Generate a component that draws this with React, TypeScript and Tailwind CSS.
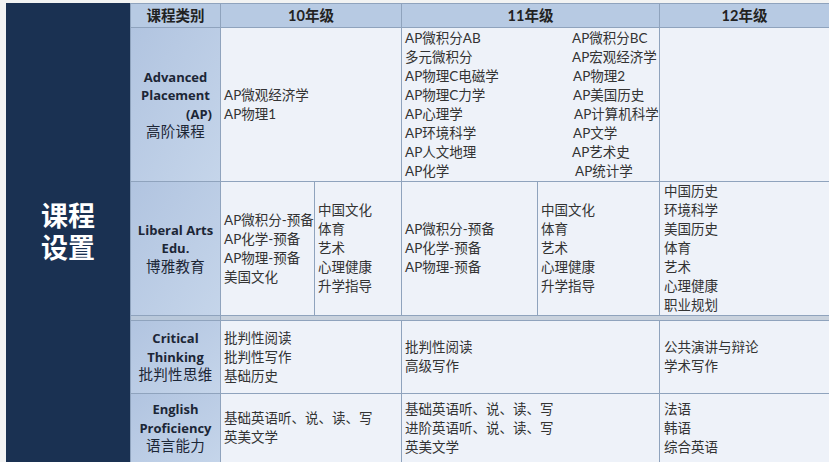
import React from "react";

const cellFont = { fontFamily: '"Lato", "Noto Sans CJK SC", sans-serif' };

function Lines({ items }: { items: string[] }) {
  return (
    <div className="flex flex-col">
      {items.map((t, i) => (
        <div key={i} className="whitespace-nowrap">{t}</div>
      ))}
    </div>
  );
}

function Cell({ children, className = "" }: { children?: React.ReactNode; className?: string }) {
  return (
    <div
      className={
        "flex items-center border-r border-b border-[#8fa3bd] bg-[#eef2f9] pl-[3px] text-[13.5px] leading-[19px] text-[#333] " +
        className
      }
    >
      {children}
    </div>
  );
}

function Cat({ children }: { children: React.ReactNode }) {
  return (
    <div className="flex flex-col items-center justify-center border-r border-b border-[#8fa3bd] bg-linear-to-br from-[#b1c4e0] to-[#c5d5ea] text-center leading-[18.5px] text-[#1c2636]">
      {children}
    </div>
  );
}

function En({ children, className = "" }: { children: React.ReactNode; className?: string }) {
  return (
    <div
      className={"font-bold text-[13px] whitespace-nowrap " + className}
      style={{ fontFamily: '"Open Sans", sans-serif' }}
    >
      {children}
    </div>
  );
}

function Zh({ children }: { children: React.ReactNode }) {
  return <div className="text-[14.5px] whitespace-nowrap tracking-[0.3px]">{children}</div>;
}

const ap11Left = ["AP微积分AB", "多元微积分", "AP物理C电磁学", "AP物理C力学", "AP心理学", "AP环境科学", "AP人文地理", "AP化学"];
const ap11Right: [string, string][] = [
  ["AP微积分BC", "pl-0"],
  ["AP宏观经济学", "pl-0"],
  ["AP物理2", "pl-[1px]"],
  ["AP美国历史", "pl-[1px]"],
  ["AP计算机科学", "pl-[2px]"],
  ["AP文学", "pl-[1px]"],
  ["AP艺术史", "pl-0"],
  ["AP统计学", "pl-[3px]"],
];

export default function App() {
  return (
    <div className="flex h-[462px] w-[829px] overflow-hidden bg-[#f2f3f3] pl-[6px] pt-[3px]" style={cellFont}>
      <div className="flex w-[124px] shrink-0 items-center justify-center bg-[#1a3152] pb-[4px]">
        <div
          className="text-center text-[27px] font-bold leading-[32px] text-white"
          style={{ fontFamily: '"Noto Sans CJK SC", sans-serif' }}
        >
          课程
          <br />
          设置
        </div>
      </div>
      <div className="grid w-[699px] grid-cols-[90px_94px_87px_136px_122px_170px] grid-rows-[24px_154px_134px_5px_73px_69px] border-t border-l border-[#8fa3bd]">
        {/* header */}
        <div className="flex items-center justify-center border-r border-b border-[#8fa3bd] bg-[#b7cae3] text-[14.5px] font-bold text-[#222]">
          课程类别
        </div>
        <div className="col-span-2 flex items-center justify-center border-r border-b border-[#8fa3bd] bg-[#b7cae3] text-[14.5px] font-bold text-[#222]">
          10年级
        </div>
        <div className="col-span-2 flex items-center justify-center border-r border-b border-[#8fa3bd] bg-[#b7cae3] text-[14.5px] font-bold text-[#222]">
          11年级
        </div>
        <div className="flex items-center justify-center border-r border-b border-[#8fa3bd] bg-[#b7cae3] text-[14.5px] font-bold text-[#222]">
          12年级
        </div>

        {/* AP row */}
        <Cat>
          <En>Advanced</En>
          <En>Placement</En>
          <En className="self-end pr-[8px]">(AP)</En>
          <Zh>高阶课程</Zh>
        </Cat>
        <Cell className="col-span-2">
          <Lines items={["AP微观经济学", "AP物理1"]} />
        </Cell>
        <Cell className="col-span-2">
          <div className="grid grid-cols-[167px_auto]">
            <div className="flex flex-col">
              {ap11Left.map((t) => (
                <div key={t} className="whitespace-nowrap">{t}</div>
              ))}
            </div>
            <div className="flex flex-col">
              {ap11Right.map(([t, c]) => (
                <div key={t} className={"whitespace-nowrap " + c}>{t}</div>
              ))}
            </div>
          </div>
        </Cell>
        <Cell />

        {/* Liberal Arts row */}
        <Cat>
          <En>Liberal Arts</En>
          <En>Edu.</En>
          <Zh>博雅教育</Zh>
        </Cat>
        <Cell>
          <Lines items={["AP微积分-预备", "AP化学-预备", "AP物理-预备", "美国文化"]} />
        </Cell>
        <Cell>
          <Lines items={["中国文化", "体育", "艺术", "心理健康", "升学指导"]} />
        </Cell>
        <Cell>
          <Lines items={["AP微积分-预备", "AP化学-预备", "AP物理-预备"]} />
        </Cell>
        <Cell>
          <Lines items={["中国文化", "体育", "艺术", "心理健康", "升学指导"]} />
        </Cell>
        <Cell className="pl-[4px]">
          <Lines items={["中国历史", "环境科学", "美国历史", "体育", "艺术", "心理健康", "职业规划"]} />
        </Cell>

        {/* separator */}
        <div className="border-r border-b border-[#8fa3bd] bg-[#b9c8da]" />
        <div className="col-span-5 border-r border-b border-[#8fa3bd] bg-[#c9d2dd]" />

        {/* Critical Thinking row */}
        <Cat>
          <En>Critical</En>
          <En>Thinking</En>
          <Zh>批判性思维</Zh>
        </Cat>
        <Cell className="col-span-2">
          <Lines items={["批判性阅读", "批判性写作", "基础历史"]} />
        </Cell>
        <Cell className="col-span-2">
          <Lines items={["批判性阅读", "高级写作"]} />
        </Cell>
        <Cell className="pl-[4px]">
          <Lines items={["公共演讲与辩论", "学术写作"]} />
        </Cell>

        {/* English row */}
        <Cat>
          <En>English</En>
          <En>Proficiency</En>
          <Zh>语言能力</Zh>
        </Cat>
        <Cell className="col-span-2">
          <Lines items={["基础英语听、说、读、写", "英美文学"]} />
        </Cell>
        <Cell className="col-span-2">
          <Lines items={["基础英语听、说、读、写", "进阶英语听、说、读、写", "英美文学"]} />
        </Cell>
        <Cell className="pl-[4px]">
          <Lines items={["法语", "韩语", "综合英语"]} />
        </Cell>
      </div>
    </div>
  );
}
